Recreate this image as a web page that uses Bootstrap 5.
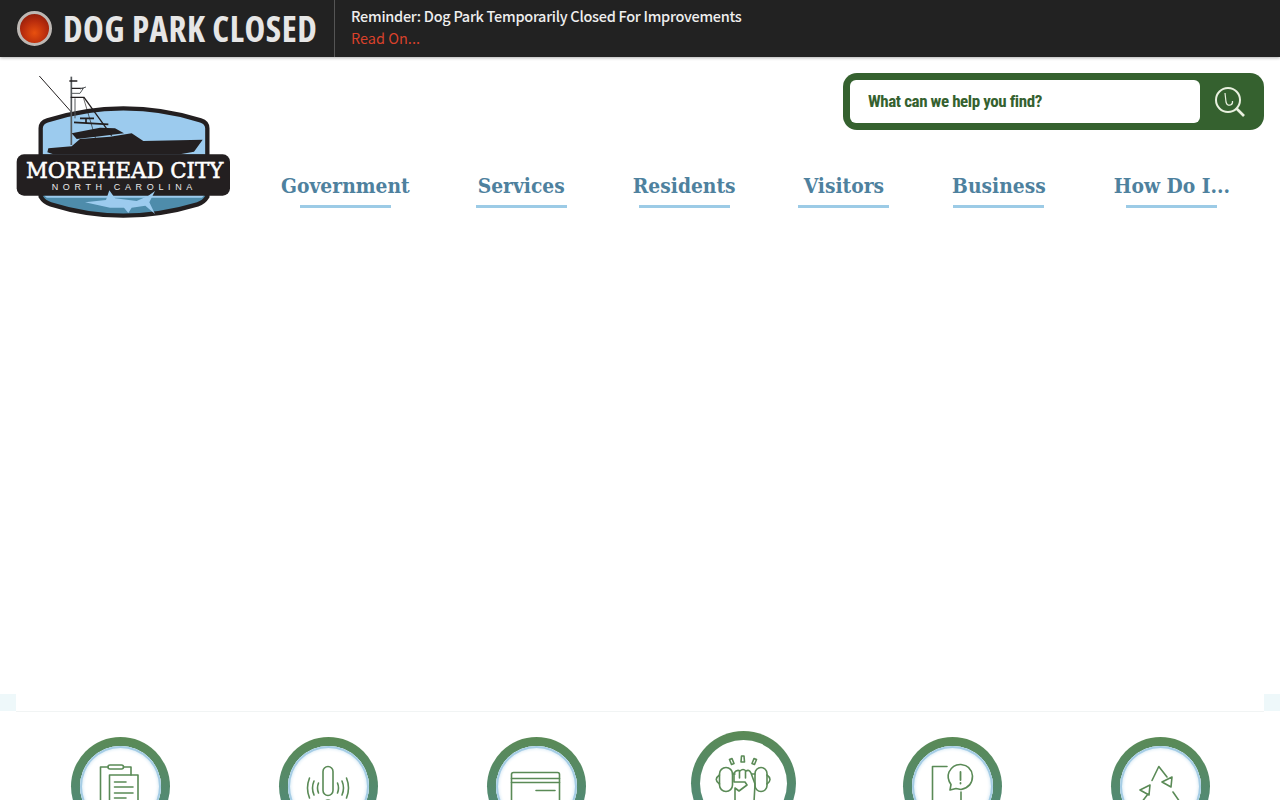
<!DOCTYPE html>
<html lang="en">
<head>
    <meta charset="UTF-8">
    <meta name="viewport" content="width=device-width, initial-scale=1.0">
    <title>Morehead City, NC</title>
    <link href="https://cdn.jsdelivr.net/npm/bootstrap@5.3.0/dist/css/bootstrap.min.css" rel="stylesheet">
    <style>
        html, body { height: 100%; overflow: hidden; }
        body { font-family: "Noto Sans", sans-serif; background: #fff; }

        .alert-strip { height: 57px; background: #222; box-shadow: 0 1px 3px rgba(0,0,0,.3); position: relative; }
        .alert-title-box { width: 335px; padding-left: 17px; gap: 11px; border-right: 1px solid #555; }
        .alert-lamp { width: 35px; height: 35px; border-radius: 50%; border: 3px solid #bdb8b4; background: radial-gradient(circle at 50% 65%, #e8500f 0%, #b82c0d 50%, #7a1609 100%); }
        .alert-title { font-family: "Open Sans", "Noto Sans", sans-serif; font-stretch: 75%; font-weight: 700; font-size: 35px; letter-spacing: .55px; line-height: 1; color: #e6e6e6; white-space: nowrap; }
        .alert-msg { padding-left: 16px; margin-top: -3px; font-family: "Noto Sans CJK SC", "Noto Sans", sans-serif; font-size: 14.5px; line-height: 22px; }
        .alert-msg-title { color: #eee; font-weight: 500; letter-spacing: -.28px; }
        .alert-msg-link { color: #d9412b; text-decoration: none; }

        .site-top { height: 637px; padding-left: 16px; padding-right: 16px; }
        .logo-box { width: 250px; margin-left: -16px; margin-top: 8px; flex: none; }
        .search-bar { width: 421px; height: 57px; margin-top: 16px; padding: 7px; background: #35612f; border-radius: 14px; }
        .search-input { width: 350px; height: 43px; background: #fff; border: 0; border-radius: 6px; padding: 0 18px 2px; font-family: "Roboto", sans-serif; font-stretch: 75%; font-weight: 700; font-size: 17px; letter-spacing: -.42px; color: #35612f; }
        .search-input::placeholder { color: #35612f; opacity: 1; }
        .search-btn { flex: 1; background: none; border: 0; padding: 0 0 0 2px; }

        .main-menu { margin-top: 41px; margin-right: 34px; gap: 68px; }
        .main-menu a { display: block; font-family: "DejaVu Serif Condensed", "DejaVu Serif", serif; font-weight: 700; font-size: 20.8px; line-height: 30px; color: #4e819e; text-decoration: none; position: relative; padding-bottom: 7px; white-space: nowrap; }
        .main-menu a::after { content: ""; position: absolute; left: 50%; bottom: 0; width: 91px; height: 3px; margin-left: -45.5px; background: #9ccbe6; }

        .quick-strip { height: 17px; background: #eef8fa; padding: 0 16px; }
        .quick-strip-inner { height: 18px; background: #fff; border-bottom: 1px solid #f1f4f4; }
        .quick-row { padding: 26px 16px 0; }
        .quick-item { width: 208px; flex: none; display: flex; justify-content: center; }
        .quick-ring { width: 99px; height: 99px; border-radius: 50%; padding: 9px; background: linear-gradient(#5a8a56, #4f8a84); }
        .quick-ring-in { width: 100%; height: 100%; border-radius: 50%; background: #fff; box-shadow: inset 0 0 0 2px #a5cde5, inset 0 0 3px 3px #dcecf6; display: flex; align-items: center; justify-content: center; }
        .quick-ring-in svg { width: 60px; height: 60px; fill: none; stroke: #5a8a56; stroke-width: 1.6; stroke-linecap: round; stroke-linejoin: round; }
        .quick-active .quick-ring { width: 105px; height: 105px; margin-top: -6px; margin-right: 2px; }
        .quick-active .quick-ring-in { box-shadow: none; }
    </style>
</head>
<body>
    <div class="alert-strip d-flex">
        <div class="alert-title-box d-flex align-items-center">
            <span class="alert-lamp flex-shrink-0"></span>
            <span class="alert-title">DOG PARK CLOSED</span>
        </div>
        <div class="alert-msg d-flex flex-column justify-content-center">
            <div class="alert-msg-title">Reminder: Dog Park Temporarily Closed For Improvements</div>
            <a class="alert-msg-link" href="#">Read On...</a>
        </div>
    </div>

    <div class="site-top d-flex">
        <a href="#" class="logo-box">
            <svg width="250" height="160" viewBox="0 0 750 480">
                <!-- badge -->
                <path d="M122 190 Q122 172 142 166 Q255 130 370 130 Q490 130 602 166 Q622 172 622 190 L622 275 L122 275 Z" fill="#9ccbee" stroke="#231f20" stroke-width="13"/>
                <path d="M122 385 L622 385 L622 395 Q612 412 593 418 Q480 452 370 452 Q260 452 152 418 Q132 412 122 395 Z" fill="#4e8cab" stroke="#231f20" stroke-width="13"/>
                <path d="M128 388 L616 388 L606 398 L140 398 Z" fill="#9ccbee"/>
                <!-- rigging -->
                <g fill="none" stroke="#231f20">
                    <path d="M118 33 L222 150" stroke-width="3"/>
                    <path d="M214 35 L214 240" stroke-width="5" stroke="#55595c"/>
                    <path d="M208 48 L232 48 M215 70 L250 70 M212 97 L252 97 L335 212" stroke-width="4"/>
                    <path d="M215 85 L240 85 L250 70 M240 72 L258 66 M225 100 L225 160" stroke-width="3" stroke="#55595c"/>
                    <path d="M250 97 L292 238" stroke-width="2"/>
                </g>
                <!-- boat -->
                <path d="M142 262 L145 250 L215 244 L240 222 L330 215 L395 205 L430 228 L608 224 L582 260 L540 268 L160 268 Z" fill="#231f20"/>
                <path d="M215 205 L300 188 L345 190 L372 205 L300 214 L230 222 Z" fill="#231f20"/>
                <path d="M222 172 L325 178 M240 160 L282 160 M258 160 L258 175" stroke="#231f20" stroke-width="5" fill="none"/>
                <!-- banner -->
                <rect x="50" y="268" width="640" height="124" rx="22" fill="#231f20"/>
                <text x="78" y="338" textLength="592" lengthAdjust="spacingAndGlyphs" font-family="DejaVu Serif Condensed, DejaVu Serif, serif" font-size="68" fill="#fff" stroke="#fff" stroke-width="1.5">MOREHEAD CITY</text>
                <text x="155" y="376" textLength="422" font-family="Liberation Sans, sans-serif" font-size="27" fill="#e8e8e8">NORTH CAROLINA</text>
                <!-- marlin -->
                <path d="M255 412 L318 405 L328 376 L345 400 L410 408 L445 392 L465 378 L448 412 L465 447 L436 422 L395 428 L385 444 L372 428 L330 428 Z" fill="#9ccbee"/>
            </svg>
        </a>
        <div class="flex-grow-1 d-flex flex-column align-items-end">
            <form class="search-bar d-flex" onsubmit="return false">
                <input class="search-input" type="text" placeholder="What can we help you find?" aria-label="Search">
                <button class="search-btn" type="submit" aria-label="Search">
                    <svg width="32" height="32" viewBox="0 0 32 32" fill="none" stroke="#e9f0df" stroke-width="2">
                        <circle cx="14" cy="14" r="12"/>
                        <path d="M22.5 22.5 L30 30" stroke-width="2.6"/>
                        <path d="M11 7 L12 16 Q13 20 16.5 19 Q19 18 18.5 15" stroke-width="1.2"/>
                    </svg>
                </button>
            </form>
            <nav class="main-menu d-flex">
                <a href="#">Government</a>
                <a href="#">Services</a>
                <a href="#">Residents</a>
                <a href="#">Visitors</a>
                <a href="#">Business</a>
                <a href="#">How Do I...</a>
            </nav>
        </div>
    </div>

    <div class="quick-strip"><div class="quick-strip-inner"></div></div>
    <div class="quick-row d-flex">
        <div class="quick-item"><div class="quick-ring"><div class="quick-ring-in">
            <svg viewBox="0 0 60 60">
                <path d="M18 10 H10.500 V52 H19.500 M33.500 10 H41 V18"/>
                <rect x="18" y="8" width="15.500" height="4" rx="2"/>
                <path d="M19.500 18 H48 V56 H19.500 Z"/>
                <path d="M24.500 25 H36 M24.500 30 H43 M24.500 36 H43 M24.500 41 H36"/>
            </svg>
        </div></div></div>
        <div class="quick-item"><div class="quick-ring"><div class="quick-ring-in">
            <svg viewBox="0 0 60 60">
                <rect x="25" y="9.500" width="10" height="29" rx="5"/>
                <path d="M20.500 26 Q18.500 31 20.500 36 M16 24 Q13 31 16 38 M11.500 21 Q7.500 31 11.500 41"/>
                <path d="M39.500 26 Q41.500 31 39.500 36 M44 24 Q47 31 44 38 M48.500 21 Q52.500 31 48.500 41"/>
                <circle cx="30" cy="46" r="3"/>
            </svg>
        </div></div></div>
        <div class="quick-item"><div class="quick-ring"><div class="quick-ring-in">
            <svg viewBox="0 0 60 60">
                <rect x="5.500" y="15.500" width="48" height="38" rx="2"/>
                <path d="M5.500 21.500 H53.500 M5.500 25.500 H53.500 M30 33.500 H49"/>
            </svg>
        </div></div></div>
        <div class="quick-item quick-active"><div class="quick-ring"><div class="quick-ring-in">
            <svg viewBox="0 0 60 60">
                <path d="M16.500 5.500 L19 4.500 L21 9.500 L18.500 10.500 Z M28.500 2 H31 L31.500 8 H28 Z M41 4.500 L43.500 5.500 L41.500 10.500 L39 9.500 Z"/>
                <rect x="6.500" y="13.500" width="13" height="24" rx="6.500"/>
                <rect x="42" y="13.500" width="12" height="24" rx="6"/>
                <path d="M6.500 21 Q0 25.500 6.500 30 M54 21 Q60 25.500 54 30 M19.500 20 H22 M39 20 H42"/>
                <path d="M21 28 V19 Q24 15 27 17 Q30 14 33 17 Q36 15 38 19 L42 30 L41 48 M21 28 H32 L34 31 L26 37 L22 34 V48 M26.500 17 V24 M32.500 17 V24"/>
            </svg>
        </div></div></div>
        <div class="quick-item"><div class="quick-ring"><div class="quick-ring-in">
            <svg viewBox="0 0 60 60">
                <path d="M25 9.500 H10.500 V58 M39 35 V58"/>
                <path d="M34 31.500 L28 33 L29 27.500 Q24.500 21 27 15 Q31 7 39 7.500 Q49.500 8.500 50.500 19 Q50.500 30 39 32.500 Z"/>
                <path d="M38.500 15 V23 M38.500 26 V26.500" stroke-width="1.8"/>
            </svg>
        </div></div></div>
        <div class="quick-item"><div class="quick-ring"><div class="quick-ring-in">
            <svg viewBox="0 0 60 60">
                <path d="M22 23.500 L28.800 9.500 L37 20 M42 20 L32 25 L41 30 Z M20 28 L10 33 L19 38 Z M18 37 L9.500 48 M43 35 L52 48 M24 47 H36"/>
            </svg>
        </div></div></div>
    </div>

    <script src="https://cdn.jsdelivr.net/npm/bootstrap@5.3.0/dist/js/bootstrap.bundle.min.js"></script>
</body>
</html>
